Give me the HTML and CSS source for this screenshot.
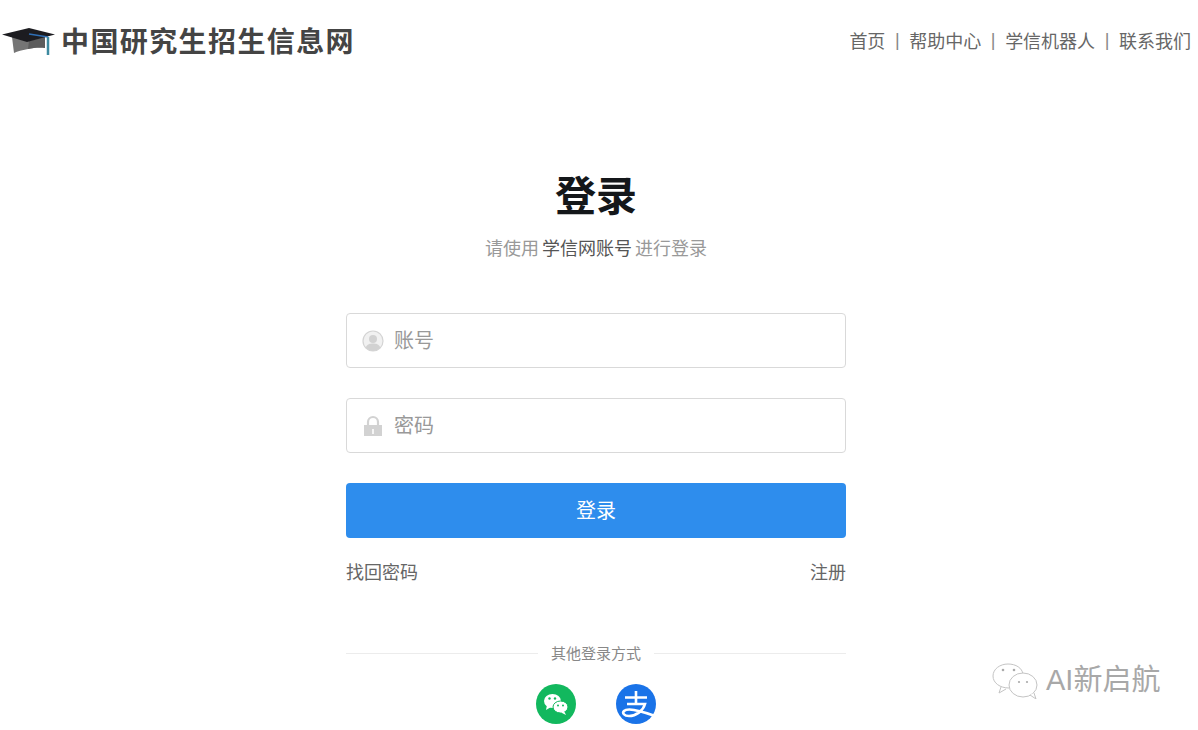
FILE: index.html
```html
<!DOCTYPE html>
<html lang="zh-CN">
<head>
    <meta charset="UTF-8">
    <title>中国研究生招生信息网 - 登录</title>
    <link rel="stylesheet" href="styles.css">
</head>
<body>
    <header class="top-bar">
        <div class="logo">
            <svg class="logo-cap" width="54" height="30" viewBox="0 0 54 30">
                <path d="M11 12 L44 12 L44 23 C36 22 22 24 13 28 Z" fill="#757575"/>
                <path d="M28 16 L44 12 L44 23 C38 22 32 23 27 24 Z" fill="#5c5c5c"/>
                <path d="M1 9.5 L28 3 L54 9.5 L26 17 Z" fill="#1c1c20"/>
                <path d="M28 9 L47 12" stroke="#2f6fb5" stroke-width="1.5" fill="none"/>
                <path d="M47 12 L47 30" stroke="#3d8aa0" stroke-width="2.5" fill="none"/>
            </svg>
            <span class="logo-text">中国研究生招生信息网</span>
        </div>
        <nav class="top-nav">
            <a>首页</a><span class="sep">|</span>
            <a>帮助中心</a><span class="sep">|</span>
            <a>学信机器人</a><span class="sep">|</span>
            <a>联系我们</a>
        </nav>
    </header>

    <main class="login-box">
        <h1>登录</h1>
        <p class="sub">请使用 <b>学信网账号</b> 进行登录</p>

        <div class="field">
            <svg width="22" height="22" viewBox="0 0 22 22">
                <circle cx="11" cy="11" r="10" fill="#f1f1f1" stroke="#d4d4d4" stroke-width="1.2"/>
                <circle cx="11" cy="9" r="4" fill="#d2d2d2"/>
                <path d="M3.8 17.5 C5 14 8 13.5 11 13.5 C14 13.5 17 14 18.2 17.5 C16.5 19.8 14 21 11 21 C8 21 5.5 19.8 3.8 17.5 Z" fill="#d2d2d2"/>
            </svg>
            <span>账号</span>
        </div>
        <div class="field">
            <svg width="22" height="22" viewBox="0 0 22 22">
                <path d="M6 10 V7 A5 5 0 0 1 16 7 V10" fill="none" stroke="#d2d2d2" stroke-width="2.2"/>
                <path d="M2 10 H20 V21 H2 Z" fill="#d2d2d2"/>
                <path d="M10 14 H12 V19 H10 Z" fill="#f5f5f5"/>
            </svg>
            <span>密码</span>
        </div>
        <button class="submit">登录</button>

        <div class="links">
            <a>找回密码</a>
            <a>注册</a>
        </div>

        <div class="other-title"><span>其他登录方式</span></div>
        <div class="other-icons">
            <svg width="40" height="40" viewBox="0 0 40 40">
                <circle cx="20" cy="20" r="20" fill="#12b85e"/>
                <ellipse cx="16.5" cy="17" rx="8.5" ry="7" fill="#fff"/>
                <path d="M11 21 L10 26 L15 23 Z" fill="#fff"/>
                <ellipse cx="24.5" cy="23" rx="7.5" ry="6" fill="#fff" stroke="#12b85e"/>
                <path d="M28 27 L30 31 L25 28.5 Z" fill="#fff"/>
                <circle cx="13.5" cy="14.5" r="1.2" fill="#12b85e"/>
                <circle cx="19" cy="14.5" r="1.2" fill="#12b85e"/>
                <circle cx="22" cy="21.5" r="1" fill="#12b85e"/>
                <circle cx="27" cy="21.5" r="1" fill="#12b85e"/>
            </svg>
            <svg width="40" height="40" viewBox="0 0 40 40">
                <circle cx="20" cy="20" r="20" fill="#1a73e8"/>
                <path d="M9 13.5 H31 M20 7 V20 M11 20 H29 C27 27 20 32 13 32 C8 32 6 29 8 27 C11 24 20 25 39 32" fill="none" stroke="#fff" stroke-width="2.6"/>
            </svg>
        </div>
    </main>

    <div class="watermark">
        <svg width="50" height="36" viewBox="0 0 50 36">
            <path d="M17 25 C8 25 1 20 1 13 C1 6 8 1 16 1 C24 1 30 5 31 11 M9 24 L7 30 L14 26" fill="none" stroke="#c4c4c4" stroke-width="1"/>
            <ellipse cx="31" cy="22" rx="14" ry="12" fill="#fff" stroke="#c4c4c4"/>
            <path d="M38 32 L44 36 L42 30" fill="#fff" stroke="#c4c4c4"/>
            <circle cx="11" cy="7" r="1.3" fill="#aaa"/>
            <circle cx="22" cy="7" r="1.3" fill="#aaa"/>
            <circle cx="27" cy="19" r="1.1" fill="#aaa"/>
            <circle cx="35" cy="19" r="1.1" fill="#aaa"/>
        </svg>
        <span>AI新启航</span>
    </div>
</body>
</html>
```

FILE: styles.css
```css
* {
    margin: 0;
    padding: 0;
    box-sizing: border-box;
}
body {
    background: #fff;
    font-family: "Liberation Sans", "Noto Sans CJK SC", sans-serif;
    color: #666;
    position: relative;
    height: 730px;
    overflow: hidden;
}
.top-bar {
    display: flex;
    justify-content: space-between;
    align-items: center;
    height: 80px;
    padding: 0 7px 0 1px;
}
.logo {
    display: flex;
    align-items: center;
    gap: 6px;
}
.logo-text {
    font-size: 28px;
    font-weight: 700;
    letter-spacing: 1.4px;
    color: #444;
}
.top-nav {
    display: flex;
    align-items: center;
    font-size: 18px;
    color: #666;
}
.sep {
    margin: 0 9.6px;
    color: #888;
}
.login-box {
    width: 500px;
    margin-left: 346px;
    padding-top: 92px;
}
h1 {
    font-size: 41px;
    line-height: 50px;
    font-weight: 700;
    color: #14171a;
    text-align: center;
}
.sub {
    margin-top: 14px;
    margin-bottom: 51px;
    font-size: 18px;
    line-height: 26px;
    word-spacing: -2px;
    color: #999;
    text-align: center;
}
.sub b {
    font-weight: 400;
    color: #555;
}
.field {
    display: flex;
    align-items: center;
    gap: 10px;
    height: 55px;
    padding-left: 15px;
    margin-bottom: 30px;
    border: 1px solid #d9d9d9;
    border-radius: 4px;
    font-size: 20px;
    color: #999;
}
.field span {
    padding-bottom: 2px;
}
.submit {
    display: block;
    width: 100%;
    height: 55px;
    padding-bottom: 2px;
    background: #2e8ded;
    border: none;
    border-radius: 4px;
    color: #fff;
    font-family: inherit;
    font-size: 20px;
}
.links {
    display: flex;
    justify-content: space-between;
    margin-top: 22px;
    font-size: 18px;
    line-height: 26px;
    color: #666;
}
.other-title {
    display: flex;
    align-items: center;
    gap: 13px;
    margin-top: 57px;
    font-size: 15px;
    line-height: 20px;
    color: #888;
}
.other-title span {
    padding-top: 1px;
}
.other-title::before,
.other-title::after {
    content: "";
    flex: 1;
    height: 1px;
    background: #ececec;
}
.other-icons {
    display: flex;
    justify-content: center;
    gap: 40px;
    margin-top: 20px;
}
.watermark {
    position: absolute;
    left: 992px;
    top: 656px;
    display: flex;
    align-items: center;
    gap: 4px;
    font-size: 29px;
    color: #a8a8a8;
}
.watermark span {
    padding-bottom: 8px;
}
```
